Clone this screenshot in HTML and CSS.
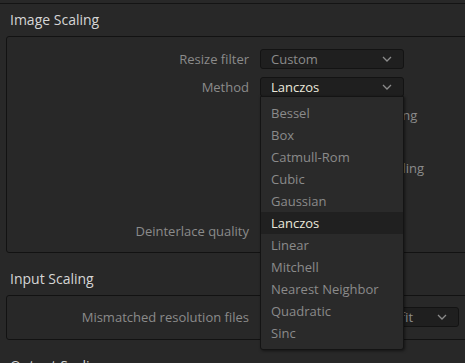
FILE: index.html
```html
<!DOCTYPE html>
<html lang="en">
    <head>
        <meta charset="UTF-8">
        <meta name="viewport" content="width=device-width, initial-scale=1.0">
        <title>Image Scaling</title>
        <link rel="stylesheet" href="styles.css">
    </head>
    <body>
        <div class="top-edge"></div>

        <div class="section">
            <h2 class="section-title">Image Scaling</h2>
            <div class="panel">
                <div class="row">
                    <span class="label">Resize filter</span>
                    <div class="select">
                        <span>Custom</span>
                        <svg class="chevron" width="10" height="6" viewBox="0 0 10 6"><polyline points="1,1 5,5 9,1" /></svg>
                    </div>
                </div>
                <div class="row">
                    <span class="label">Method</span>
                    <div class="select open">
                        <span class="value">Lanczos</span>
                        <svg class="chevron" width="10" height="6" viewBox="0 0 10 6"><polyline points="1,1 5,5 9,1" /></svg>
                        <ul class="menu">
                            <li>Bessel</li>
                            <li>Box</li>
                            <li>Catmull-Rom</li>
                            <li>Cubic</li>
                            <li>Gaussian</li>
                            <li class="selected">Lanczos</li>
                            <li>Linear</li>
                            <li>Mitchell</li>
                            <li>Nearest Neighbor</li>
                            <li>Quadratic</li>
                            <li>Sinc</li>
                        </ul>
                    </div>
                </div>
                <div class="row">
                    <span class="label"></span>
                    <span class="check">Use smoother resizing</span>
                </div>
                <div class="row row-far">
                    <span class="label"></span>
                    <span class="check">Override output scaling</span>
                </div>
                <div class="row row-farther">
                    <span class="label">Deinterlace quality</span>
                    <div class="select">
                        <span>Normal</span>
                        <svg class="chevron" width="10" height="6" viewBox="0 0 10 6"><polyline points="1,1 5,5 9,1" /></svg>
                    </div>
                </div>
            </div>
        </div>

        <div class="section">
            <h2 class="section-title">Input Scaling</h2>
            <div class="panel panel-small">
                <div class="row">
                    <span class="label">Mismatched resolution files</span>
                    <div class="select wide">
                        <span>Scale entire image to fit</span>
                        <svg class="chevron" width="10" height="6" viewBox="0 0 10 6"><polyline points="1,1 5,5 9,1" /></svg>
                    </div>
                </div>
            </div>
        </div>

        <div class="section">
            <h2 class="section-title">Output Scaling</h2>
        </div>
    </body>
</html>
```

FILE: styles.css
```css
body {
    margin: 0;
    background-color: #282828;
    font-family: "Open Sans", "Liberation Sans", sans-serif;
    font-size: 13px;
    color: #8b8b8b;
    overflow: hidden;
}

.top-edge {
    height: 3px;
    border-bottom: 1px solid #141414;
}

.section {
    margin-bottom: 10px;
}

.section-title {
    margin: 0;
    height: 32px;
    line-height: 32px;
    padding-left: 10px;
    font-size: 14px;
    font-weight: normal;
    color: #d6d6d6;
}

.panel {
    margin-left: 6px;
    margin-right: -20px;
    border: 1px solid #121212;
    border-radius: 3px;
    padding: 12px 0 11px;
    display: flex;
    flex-direction: column;
    gap: 8px;
}

.panel-small {
    padding: 11px 0 12px;
}

.row {
    display: grid;
    grid-template-columns: 242px 1fr;
    column-gap: 11px;
    align-items: center;
    height: 20px;
}

.row-far {
    margin-top: 25px;
}

.row-farther {
    margin-top: 35px;
}

.label {
    text-align: right;
    white-space: nowrap;
}

.check {
    padding-left: 22px;
    white-space: nowrap;
}

.select {
    position: relative;
    box-sizing: border-box;
    width: 144px;
    height: 20px;
    display: flex;
    align-items: center;
    justify-content: space-between;
    padding: 0 11px 0 10px;
    background-color: #1f1f1f;
    border: 1px solid #131313;
    border-radius: 3px;
    white-space: nowrap;
}

.select.wide {
    width: 199px;
}

.value {
    color: #ebe8dc;
}

.chevron {
    fill: none;
    stroke: #8b8b8b;
    stroke-width: 1.3;
}

.menu {
    position: absolute;
    top: 18px;
    left: -1px;
    width: 144px;
    box-sizing: border-box;
    margin: 0;
    padding: 5px 0;
    list-style: none;
    background-color: #2a2a2a;
    border: 1px solid #141414;
    border-radius: 0 0 3px 3px;
    box-shadow: 1px 1px 3px rgba(0, 0, 0, 0.5);
    z-index: 10;
}

.menu li {
    height: 22px;
    line-height: 22px;
    padding-left: 10px;
}

.menu .selected {
    background-color: #202020;
    color: #ebe8dc;
}
```
